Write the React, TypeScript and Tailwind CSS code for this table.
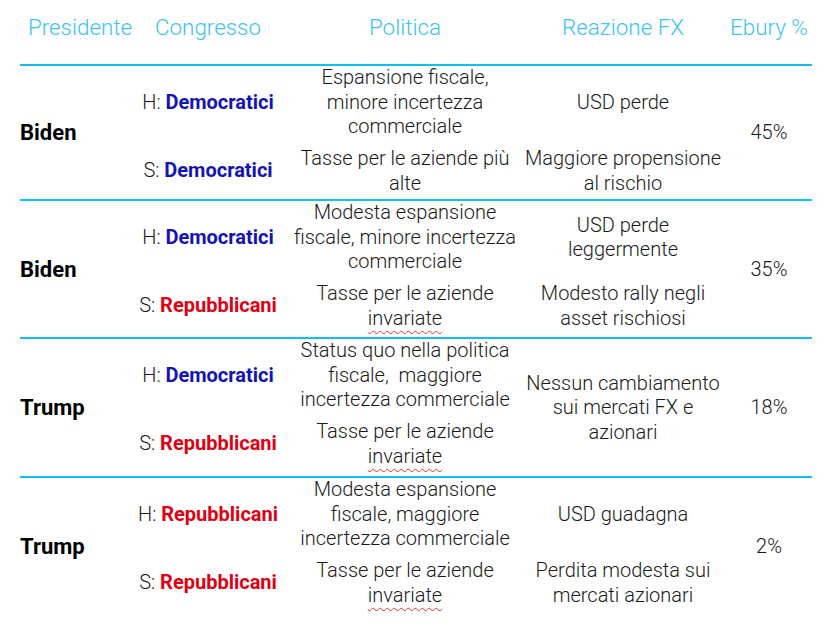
import React from "react";

type Party = "D" | "R";

type Row = {
  pres: string;
  h: Party;
  s: Party;
  pol1: React.ReactNode[];
  pol2: React.ReactNode[];
  fx1?: string[];
  fx2?: string[];
  fxSpan?: string[];
  pct: string;
  pb: string;
};

const Inv = () => (
  <span className="underline decoration-wavy decoration-[#e8332f] decoration-1 underline-offset-[5px]">
    invariate
  </span>
);

const rows: Row[] = [
  {
    pres: "Biden",
    h: "D",
    s: "D",
    pol1: ["Espansione fiscale,", "minore incertezza", "commerciale"],
    pol2: ["Tasse per le aziende più", "alte"],
    fx1: ["USD perde"],
    fx2: ["Maggiore propensione", "al rischio"],
    pct: "45%",
    pb: "pb-[5px]",
  },
  {
    pres: "Biden",
    h: "D",
    s: "R",
    pol1: ["Modesta espansione", "fiscale, minore incertezza", "commerciale"],
    pol2: ["Tasse per le aziende", <Inv key="i" />],
    fx1: ["USD perde", "leggermente"],
    fx2: ["Modesto rally negli", "asset rischiosi"],
    pct: "35%",
    pb: "pb-[8px]",
  },
  {
    pres: "Trump",
    h: "D",
    s: "R",
    pol1: ["Status quo nella politica", "fiscale,\u00a0 maggiore", "incertezza commerciale"],
    pol2: ["Tasse per le aziende", <Inv key="i" />],
    fxSpan: ["Nessun cambiamento", "sui mercati FX e", "azionari"],
    pct: "18%",
    pb: "pb-[9px]",
  },
  {
    pres: "Trump",
    h: "R",
    s: "R",
    pol1: ["Modesta espansione", "fiscale, maggiore", "incertezza commerciale"],
    pol2: ["Tasse per le aziende", <Inv key="i" />],
    fx1: ["USD guadagna"],
    fx2: ["Perdita modesta sui", "mercati azionari"],
    pct: "2%",
    pb: "pb-[8px]",
  },
];

const PartyLabel = ({ prefix, p }: { prefix: string; p: Party }) => (
  <div className="whitespace-nowrap">
    <span className="font-light">{prefix} </span>
    {p === "D" ? (
      <span className="font-bold text-[#1414b4]">Democratici</span>
    ) : (
      <span className="font-bold text-[#e00012]">Repubblicani</span>
    )}
  </div>
);

const Lines = ({ lines }: { lines: React.ReactNode[] }) => (
  <>
    {lines.map((l, i) => (
      <div key={i} className="whitespace-nowrap">
        {l}
      </div>
    ))}
  </>
);

export default function App() {
  return (
    <div
      className="w-[826px] h-[632px] bg-white text-[#1a1a1a] overflow-hidden"
      style={{ fontFamily: "Roboto, 'Liberation Sans', sans-serif" }}
    >
      <div className="ml-[20px] w-[792px]">
        {/* Header */}
        <div className="grid grid-cols-[120px_136px_258px_178px_1fr] h-[64px] pt-[12px] text-[22.4px] leading-[30px] font-light text-[#3cc3f2]">
          <div className="flex justify-center whitespace-nowrap">Presidente</div>
          <div className="flex justify-center whitespace-nowrap">Congresso</div>
          <div className="flex justify-center whitespace-nowrap">Politica</div>
          <div className="flex justify-center whitespace-nowrap">Reazione FX</div>
          <div className="flex justify-center whitespace-nowrap pl-[14px]">Ebury %</div>
        </div>

        {rows.map((r, idx) => (
          <div
            key={idx}
            className="grid grid-cols-[120px_136px_258px_178px_1fr] grid-rows-[72px_auto] gap-y-2 border-t-2 border-[#12bff0] text-[20px] leading-[24.5px] font-light"
          >
            <div className="row-span-2 flex items-center pt-[2px] text-[22px] font-bold text-black">
              {r.pres}
            </div>
            <div className="col-start-2 row-start-1 flex items-center justify-center">
              <PartyLabel prefix="H:" p={r.h} />
            </div>
            <div className="col-start-3 row-start-1 flex flex-col items-center justify-center">
              <Lines lines={r.pol1} />
            </div>
            {r.fxSpan ? (
              <div className="col-start-4 row-start-1 row-span-2 flex flex-col items-center justify-center">
                <Lines lines={r.fxSpan} />
              </div>
            ) : (
              <div className="col-start-4 row-start-1 flex flex-col items-center justify-center">
                <Lines lines={r.fx1 || []} />
              </div>
            )}
            <div className="col-start-5 row-start-1 row-span-2 flex items-center justify-center pl-[14px]">
              {r.pct}
            </div>
            <div className={`col-start-2 row-start-2 flex items-center justify-center h-[48px] box-content ${r.pb}`}>
              <PartyLabel prefix="S:" p={r.s} />
            </div>
            <div className={`col-start-3 row-start-2 flex flex-col items-center h-[48px] box-content ${r.pb}`}>
              <Lines lines={r.pol2} />
            </div>
            {!r.fxSpan && (
              <div className={`col-start-4 row-start-2 flex flex-col items-center h-[48px] box-content ${r.pb}`}>
                <Lines lines={r.fx2 || []} />
              </div>
            )}
          </div>
        ))}
      </div>
    </div>
  );
}
